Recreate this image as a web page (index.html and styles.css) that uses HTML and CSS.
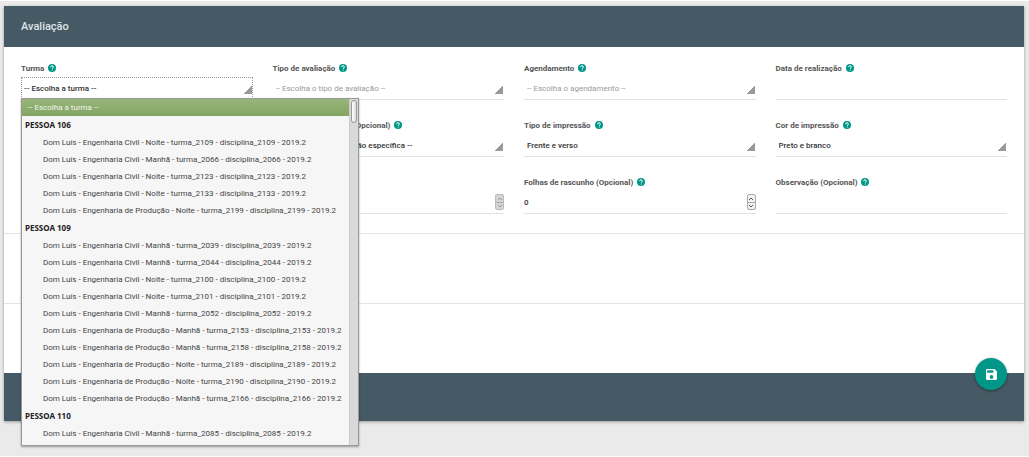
FILE: index.html
```html
<!DOCTYPE html>
<html lang="pt-BR">
<head>
<meta charset="utf-8">
<title>Avaliação</title>
<link rel="stylesheet" href="styles.css">
</head>
<body>
<svg class="sprite" aria-hidden="true">
  <symbol id="help" viewBox="0 0 16 16"><circle cx="8" cy="8" r="8" fill="#009688"/><path d="M5.200 6.200C5.200 4.400 6.400 3.500 8 3.500s2.800 1 2.800 2.500c0 1.800-2.200 1.900-2.200 3.600" fill="none" stroke="#fff" stroke-width="1.900"/><circle cx="8.500" cy="12" r="1.200" fill="#fff"/></symbol>
</svg>
<main class="page">
  <form class="card">
    <header class="card-header"><h1 class="title">Avaliação</h1></header>
    <section class="fields">
      <div class="field">
        <div class="label-row"><label for="turma">Turma</label><svg class="help"><use href="#help"/></svg></div>
        <div class="control control-open">
          <select id="turma" class="input select"><option>-- Escolha a turma --</option></select>
          <div class="menu">
            <ul class="options" role="listbox" aria-label="Turma">
              <li class="option option-active" role="option" aria-selected="true">-- Escolha a turma --</li>
              <li class="group">PESSOA 106</li>
              <li class="option" role="option">Dom Luís - Engenharia Civil - Noite - turma_2109 - disciplina_2109 - 2019.2</li>
              <li class="option" role="option">Dom Luís - Engenharia Civil - Manhã - turma_2066 - disciplina_2066 - 2019.2</li>
              <li class="option" role="option">Dom Luís - Engenharia Civil - Noite - turma_2123 - disciplina_2123 - 2019.2</li>
              <li class="option" role="option">Dom Luís - Engenharia Civil - Noite - turma_2133 - disciplina_2133 - 2019.2</li>
              <li class="option" role="option">Dom Luís - Engenharia de Produção - Noite - turma_2199 - disciplina_2199 - 2019.2</li>
              <li class="group">PESSOA 109</li>
              <li class="option" role="option">Dom Luís - Engenharia Civil - Manhã - turma_2039 - disciplina_2039 - 2019.2</li>
              <li class="option" role="option">Dom Luís - Engenharia Civil - Manhã - turma_2044 - disciplina_2044 - 2019.2</li>
              <li class="option" role="option">Dom Luís - Engenharia Civil - Noite - turma_2100 - disciplina_2100 - 2019.2</li>
              <li class="option" role="option">Dom Luís - Engenharia Civil - Noite - turma_2101 - disciplina_2101 - 2019.2</li>
              <li class="option" role="option">Dom Luís - Engenharia Civil - Manhã - turma_2052 - disciplina_2052 - 2019.2</li>
              <li class="option" role="option">Dom Luís - Engenharia de Produção - Manhã - turma_2153 - disciplina_2153 - 2019.2</li>
              <li class="option" role="option">Dom Luís - Engenharia de Produção - Manhã - turma_2158 - disciplina_2158 - 2019.2</li>
              <li class="option" role="option">Dom Luís - Engenharia de Produção - Noite - turma_2189 - disciplina_2189 - 2019.2</li>
              <li class="option" role="option">Dom Luís - Engenharia de Produção - Noite - turma_2190 - disciplina_2190 - 2019.2</li>
              <li class="option" role="option">Dom Luís - Engenharia de Produção - Manhã - turma_2166 - disciplina_2166 - 2019.2</li>
              <li class="group">PESSOA 110</li>
              <li class="option" role="option">Dom Luís - Engenharia Civil - Manhã - turma_2085 - disciplina_2085 - 2019.2</li>
            </ul>
            <div class="track"><div class="thumb"></div></div>
          </div>
        </div>
      </div>
      <div class="field">
        <div class="label-row"><label for="tipo">Tipo de avaliação</label><svg class="help"><use href="#help"/></svg></div>
        <div class="control"><select id="tipo" class="input select muted"><option>-- Escolha o tipo de avaliação --</option></select></div>
      </div>
      <div class="field">
        <div class="label-row"><label for="agenda">Agendamento</label><svg class="help"><use href="#help"/></svg></div>
        <div class="control"><select id="agenda" class="input select muted"><option>-- Escolha o agendamento --</option></select></div>
      </div>
      <div class="field">
        <div class="label-row"><label for="data">Data de realização</label><svg class="help"><use href="#help"/></svg></div>
        <div class="control"><input id="data" class="input" type="text"></div>
      </div>

      <div class="field field-second-column">
        <div class="label-row"><label for="disposicao">Disposição específica (Opcional)</label><svg class="help"><use href="#help"/></svg></div>
        <div class="control"><select id="disposicao" class="input select"><option>-- Nenhuma configuração específica --</option></select></div>
      </div>
      <div class="field">
        <div class="label-row"><label for="impressao">Tipo de impressão</label><svg class="help"><use href="#help"/></svg></div>
        <div class="control"><select id="impressao" class="input select"><option>Frente e verso</option></select></div>
      </div>
      <div class="field">
        <div class="label-row"><label for="cor">Cor de impressão</label><svg class="help"><use href="#help"/></svg></div>
        <div class="control"><select id="cor" class="input select"><option>Preto e branco</option></select></div>
      </div>

      <div class="field field-second-column">
        <div class="label-row"></div>
        <div class="control">
          <input id="copias" class="input number" type="number" aria-label="Cópias" disabled>
          <div class="spinner spinner-off"><button type="button" class="step" aria-label="Aumentar" disabled><svg class="chevron" viewBox="0 0 6 4"><path d="M1 3 3 1l2 2"/></svg></button><button type="button" class="step" aria-label="Diminuir" disabled><svg class="chevron" viewBox="0 0 6 4"><path d="m1 1 2 2 2-2"/></svg></button></div>
        </div>
      </div>
      <div class="field">
        <div class="label-row"><label for="folhas">Folhas de rascunho (Opcional)</label><svg class="help"><use href="#help"/></svg></div>
        <div class="control">
          <input id="folhas" class="input number" type="number" value="0">
          <div class="spinner"><button type="button" class="step" aria-label="Aumentar"><svg class="chevron" viewBox="0 0 6 4"><path d="M1 3 3 1l2 2"/></svg></button><button type="button" class="step" aria-label="Diminuir"><svg class="chevron" viewBox="0 0 6 4"><path d="m1 1 2 2 2-2"/></svg></button></div>
        </div>
      </div>
      <div class="field">
        <div class="label-row"><label for="obs">Observação (Opcional)</label><svg class="help"><use href="#help"/></svg></div>
        <div class="control"><input id="obs" class="input" type="text"></div>
      </div>
    </section>
    <section class="band"></section>
    <section class="band"></section>
    <footer class="card-footer">
      <button type="submit" class="save" aria-label="Salvar"><svg class="save-icon" viewBox="3 3 18 18"><path fill="#fff" d="M17 3H5a2 2 0 0 0-2 2v14a2 2 0 0 0 2 2h14a2 2 0 0 0 2-2V7l-4-4zm-5 16a3 3 0 1 1 0-6 3 3 0 0 1 0 6zm3-10H5V5h10v4z"/></svg></button>
    </footer>
  </form>
</main>
</body>
</html>
```
FILE: styles.css
```css
* { box-sizing: border-box; }
body { margin: 0; background: #fff; font-family: Roboto, sans-serif; font-size: 8px; color: #333; }
.sprite { position: absolute; width: 0; height: 0; }
.page { margin: 1px 0; padding: 5px 5px 34px 4px; min-height: calc(100vh - 2px); background: #eaeaea; }
.card { background: #fff; box-shadow: 0 1px 3px rgba(0, 0, 0, .35); }
.card-header { padding: 0 17px; background: #455a64; }
.title { margin: 0; font-size: 11px; line-height: 41px; font-weight: 500; color: #dfe4e6; }
.fields {
  display: grid;
  grid-template-columns: repeat(4, minmax(0, 1fr));
  gap: 19px 20px;
  padding: 15px 17px 19px;
}
.field-second-column { grid-column: 2; }
.label-row { display: flex; align-items: center; gap: 4px; height: 12px; font-size: 8px; font-weight: 700; white-space: nowrap; color: #555; }
.help { width: 8px; height: 8px; flex: none; }
.control { position: relative; margin-top: 3px; }
.input {
  display: block;
  width: 100%;
  height: 23px;
  margin: 0;
  padding: 0;
  border: 0;
  border-bottom: 1px solid #e3e3e3;
  border-radius: 0;
  outline: 0;
  background: none;
  font: 500 8px Roboto, sans-serif;
  color: #333;
  opacity: 1;
}
.select {
  appearance: none;
  padding-left: 3px;
  background: linear-gradient(135deg, transparent 50%, #999 50%) right 1px bottom 5px / 8px 8px no-repeat;
}
.muted { color: #999; font-weight: 400; }
.control-open .input { height: 22px; padding-left: 2px; border: 1px dotted #999; border-bottom: 1px solid #4f9b95; background-position: right 0 bottom 4px; }
.number { appearance: textfield; }
.spinner { position: absolute; right: 0; bottom: 4px; display: grid; width: 9px; border: 1px solid #aaa; border-radius: 2px; background: #f1f1f1; }
.spinner-off { border-color: #bbb; background: #d5d5d5; }
.step { display: flex; align-items: center; justify-content: center; height: 7px; padding: 0; border: 0; background: none; }
.step + .step { border-top: 1px solid #aaa; }
.chevron { flex: none; width: 6px; height: 4px; fill: none; stroke: #555; }
.spinner-off .chevron { stroke: #999; }
.menu {
  position: absolute;
  z-index: 2;
  top: calc(100% - 1px);
  left: 0;
  display: flex;
  width: 338px;
  border: 1px solid #999;
  background: #f6f6f6;
  box-shadow: 0 1px 2px rgba(0, 0, 0, .35);
}
.options { flex: 1; min-width: 0; margin: 0; padding: 0 0 3px; list-style: none; line-height: 17px; }
.option { padding-left: 21px; white-space: nowrap; color: #444; }
.option-active { padding-left: 6px; background: linear-gradient(#98b57c, #83a563); color: #f3f6ef; }
.group { padding-left: 3px; font-family: "Noto Sans", sans-serif; font-weight: 700; line-height: 18px; color: #222; }
.track { flex: none; width: 9px; padding: 1px; background: #d9d9d9; border-left: 1px solid #ccc; }
.thumb { height: 23px; border: 1px solid #999; border-radius: 3px; background: linear-gradient(90deg, #fff, #ddd); }
.band { height: 70px; border-top: 1px solid #e5e5e5; }
.card-footer { position: relative; height: 48px; background: #455a64; }
.save {
  position: absolute;
  top: -15px;
  right: 17px;
  display: grid;
  place-items: center;
  width: 32px;
  height: 32px;
  padding: 0;
  border: 0;
  border-radius: 50%;
  background: #009688;
  box-shadow: 0 1px 3px rgba(0, 0, 0, .4);
}
.save-icon { width: 11px; height: 11px; }
```
